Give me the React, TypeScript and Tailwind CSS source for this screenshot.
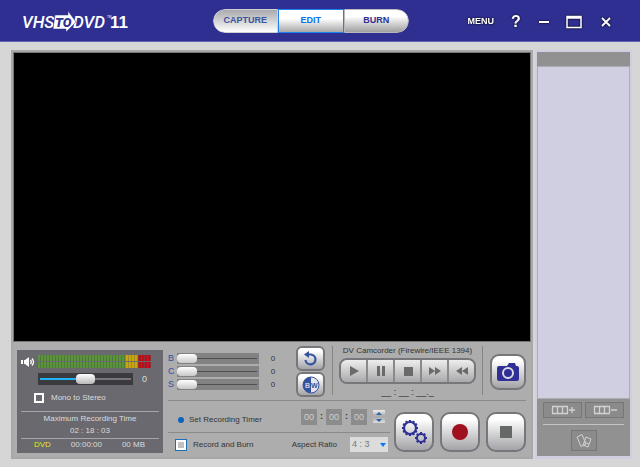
import React, { useState } from 'react';

const raised = 'flex items-center justify-center border-2 border-[#77777b] bg-linear-to-b from-white from-15% to-[#a4a4a8] cursor-pointer';
const winButton = 'flex items-center justify-center text-white drop-shadow-[0_0_1px_#000] cursor-pointer';

const Logo: React.FC = () => (
    <svg width="106" height="24" viewBox="0 0 106 24" fontFamily="Roboto, sans-serif" fill="#fff" role="img">
        <text x="0" y="19" fontSize="17" fontStyle="italic" fontWeight="500">VHS</text>
        <text x="51" y="19" fontSize="17" fontStyle="italic" fontWeight="500">DVD</text>
        <path d="M33 6H46V2L54 13L44 23V20H31Z" stroke="#2f2f91" strokeWidth="0.500" />
        <text x="33" y="18" fontSize="13" fontStyle="italic" fontWeight="900" fill="#2f2f91">TO</text>
        <text x="85" y="9" fontSize="3">TM</text>
        <text x="88" y="19" fontFamily="Liberation Sans, sans-serif" fontSize="17" fontWeight="700">11</text>
    </svg>
);

const Header: React.FC = () => (
    <header className="grid grid-cols-[13fr_auto_14fr] items-center h-[42px] bg-[#2f2f91] border-b border-[#6464b4] pl-[22px] pr-[26px]">
        <Logo />
        <nav className="flex h-6 w-[196px] rounded-xl overflow-hidden text-[9px] font-bold text-[#2f2f91]">
            <button className="w-[65px] rounded-l-xl border border-[#d0d0d4] bg-linear-to-b from-[#aaaaae] to-white text-[#3c559b] cursor-pointer">CAPTURE</button>
            <button className="w-[66px] border border-[#1e82f0] bg-linear-to-b from-white from-40% to-[#a8a8aa] text-[#0a6ef0] cursor-pointer">EDIT</button>
            <button className="w-[65px] rounded-r-xl border border-[#b8b8bc] bg-linear-to-b from-white from-30% to-[#a0a0a2] cursor-pointer">BURN</button>
        </nav>
        <div className="flex items-center justify-end gap-4 pt-[2px]">
            <button className={`${winButton} text-[9px] font-bold`}>MENU</button>
            <button className={`${winButton} w-3 text-base font-bold`} aria-label="Help">?</button>
            <button className={`${winButton} w-3`} aria-label="Minimize">
                <svg width="10" height="12"><path d="M0 6H10" stroke="currentColor" strokeWidth="2" /></svg>
            </button>
            <button className={`${winButton} w-4`} aria-label="Maximize">
                <svg width="16" height="14"><path d="M1 1.500H15V12.500H1Z M1 3H15" fill="none" stroke="currentColor" strokeWidth="1.500" /></svg>
            </button>
            <button className={`${winButton} w-4`} aria-label="Close">
                <svg width="10" height="10"><path d="M1 1L9 9M9 1L1 9" stroke="currentColor" strokeWidth="1.800" /></svg>
            </button>
        </div>
    </header>
);

const Meter: React.FC = () => (
    <div className="flex h-[6px] w-[114px]">
        <div className="w-[88px] bg-[repeating-linear-gradient(90deg,#4e7a3c_0_1px,#5c923c_1px_3px)]" />
        <div className="w-[13px] bg-[repeating-linear-gradient(90deg,#a08a28_0_1px,#caa60c_1px_3px)]" />
        <div className="w-[13px] bg-[repeating-linear-gradient(90deg,#8a3038_0_1px,#be0c18_1px_3px)]" />
    </div>
);

const AudioPanel: React.FC = () => {
    const [volume, setVolume] = useState(50);

    return (
        <section className="w-[146px] h-[103px] shrink-0 bg-[#69696f] text-[#dcdcdc] px-1 pt-[5px]">
            <div className="flex items-center gap-[2px]">
                <svg width="14" height="12" viewBox="0 0 14 12" fill="#fff">
                    <path d="M0 4H2V8H0Z M3 4H4L8 1V11L4 8H3Z" />
                    <path d="M9.500 4Q11 6 9.500 8M11 2.500Q14 6 11 9.500" fill="none" stroke="#fff" strokeWidth="1.300" />
                </svg>
                <div className="flex flex-col gap-px">
                    <Meter />
                    <Meter />
                </div>
            </div>
            <div className="flex items-center gap-[9px] mt-[5px] pl-[17px]">
                <input
                    type="range"
                    aria-label="Volume"
                    value={volume}
                    onChange={e => setVolume(Number(e.target.value))}
                    className="appearance-none w-[95px] h-3 px-[2px] bg-[#3b3b3f] [&::-webkit-slider-runnable-track]:bg-[linear-gradient(90deg,#1eb4f5_50%,#77777b_50%)] [&::-webkit-slider-runnable-track]:h-[2px] [&::-webkit-slider-thumb]:appearance-none [&::-webkit-slider-thumb]:-mt-1 [&::-webkit-slider-thumb]:w-[19px] [&::-webkit-slider-thumb]:h-[10px] [&::-webkit-slider-thumb]:rounded-[4px] [&::-webkit-slider-thumb]:bg-linear-to-b [&::-webkit-slider-thumb]:from-white [&::-webkit-slider-thumb]:to-[#b9b9bb]"
                />
                <span className="text-[9px] leading-3">0</span>
            </div>
            <label className="flex items-center gap-[7px] mt-[7px] pl-[13px] leading-[12px]">
                <input type="checkbox" className="appearance-none size-[10px] border-2 border-white checked:bg-[#1eb4f5]" />
                Mono to Stereo
            </label>
            <div className="mt-[7px] py-px border-y border-[#a5a5a9] text-center leading-[12px]">
                <div>Maximum Recording Time</div>
                <div className="whitespace-pre">02 : 18 : 03</div>
            </div>
            <div className="flex justify-between pl-[13px] pr-[14px] leading-[12px]">
                <span className="text-[#e6e614]">DVD</span>
                <span>00:00:00</span>
                <span>00 MB</span>
            </div>
        </section>
    );
};

const ColorSlider: React.FC<{ name: string; label: string }> = ({ name, label }) => {
    const [value, setValue] = useState(0);

    return (
        <div className="flex items-center h-[13px]">
            <span className="w-[9px] text-[9px] text-[#3250a0]">{name}</span>
            <input
                type="range"
                aria-label={label}
                value={value}
                onChange={e => setValue(Number(e.target.value))}
                className="appearance-none w-[82px] h-[11px] pr-[2px] bg-[#828282] [&::-webkit-slider-runnable-track]:bg-[#505052] [&::-webkit-slider-runnable-track]:h-px [&::-webkit-slider-thumb]:appearance-none [&::-webkit-slider-thumb]:-mt-[4px] [&::-webkit-slider-thumb]:w-[20px] [&::-webkit-slider-thumb]:h-[9px] [&::-webkit-slider-thumb]:rounded-[4px] [&::-webkit-slider-thumb]:bg-linear-to-b [&::-webkit-slider-thumb]:from-white [&::-webkit-slider-thumb]:to-[#c8c8ca]"
            />
            <span className="w-7 text-center">{value}</span>
        </div>
    );
};

const transport = [
    { label: 'Play', path: 'M2 1L11 6L2 11Z' },
    { label: 'Pause', path: 'M2 1H5V11H2Z M7 1H10V11H7Z' },
    { label: 'Stop', path: 'M2 2H11V11H2Z' },
    { label: 'Fast forward', path: 'M0 2L6 6L0 10Z M6 2L12 6L6 10Z' },
    { label: 'Rewind', path: 'M12 2L6 6L12 10Z M6 2L0 6L6 10Z' },
];

const Camcorder: React.FC = () => (
    <div className="flex flex-col items-center w-[151px] h-[49px] border-x border-[#858585]">
        <div className="leading-[10px] whitespace-nowrap">DV Camcorder (Firewire/IEEE 1394)</div>
        <div className="flex mt-[2px] w-[137px] h-[26px] shrink-0 rounded-[8px] border-2 border-[#77777b] divide-x-2 divide-[#8a8a8e] overflow-hidden">
            {transport.map(t => (
                <button key={t.label} aria-label={t.label} className="flex flex-1 items-center justify-center bg-linear-to-b from-[#eeeeee] to-[#a9a9ab] cursor-pointer">
                    <svg width="12" height="12" fill="#6a6a6a"><path d={t.path} /></svg>
                </button>
            ))}
        </div>
        <div className="text-[9px] leading-[16px] text-[#333] whitespace-pre">__ : __ : __._</div>
    </div>
);

const Gear: React.FC<{ cx: number; cy: number; r: number; teeth: number; width: number }> = ({ cx, cy, r, teeth, width }) => (
    <g stroke="#2f2f96" strokeWidth={width} fill="none">
        <circle cx={cx} cy={cy} r={r} />
        {Array.from({ length: teeth }, (_, i) => {
            const a = (i * 2 * Math.PI) / teeth;
            return (
                <line
                    key={i}
                    x1={cx + Math.cos(a) * r}
                    y1={cy + Math.sin(a) * r}
                    x2={cx + Math.cos(a) * (r + 2)}
                    y2={cy + Math.sin(a) * (r + 2)}
                />
            );
        })}
    </g>
);

const Timer: React.FC = () => (
    <div className="flex items-center gap-[3px]">
        {['Hours', 'Minutes', 'Seconds'].map((unit, i) => (
            <React.Fragment key={unit}>
                {i > 0 && <span className="w-[3px] text-center text-[9px] font-bold">:</span>}
                <input aria-label={unit} defaultValue="00" className="w-4 h-4 bg-[#8c8c8c] text-center text-[9px] text-[#cfcfcf]" />
            </React.Fragment>
        ))}
        <div className="flex flex-col gap-px ml-[3px]">
            <button aria-label="Increase" className="flex items-center justify-center w-3 h-[6px] bg-linear-to-b from-[#eee] to-[#aaa]">
                <svg width="6" height="3" fill="#2864aa"><path d="M0 3L3 0L6 3Z" /></svg>
            </button>
            <button aria-label="Decrease" className="flex items-center justify-center w-3 h-[6px] bg-linear-to-b from-[#aaa] to-[#ddd]">
                <svg width="6" height="3" fill="#2864aa"><path d="M0 0L3 3L6 0Z" /></svg>
            </button>
        </div>
    </div>
);

const Controls: React.FC = () => (
    <div className="flex gap-[5px] pl-1 pr-[5px] pt-[3px] pb-1">
        <div className="flex items-end"><AudioPanel /></div>
        <div className="flex-1 flex flex-col text-[#333] pb-px">
            <div className="flex justify-between h-[56px] border-b border-[#8a8a8a] pt-px">
                <div className="pt-[6px]">
                    <ColorSlider name="B" label="Brightness" />
                    <ColorSlider name="C" label="Contrast" />
                    <ColorSlider name="S" label="Saturation" />
                </div>
                <div className="flex gap-[7px]">
                    <div className="flex flex-col gap-px">
                        <button className={`${raised} w-[29px] h-[25px] rounded-[6px]`} aria-label="Reset">
                            <svg width="17" height="17" viewBox="0 0 17 17">
                                <path d="M5 4.500H9A5 5 0 1 1 3.500 10" fill="none" stroke="#34539c" strokeWidth="2.200" />
                                <path d="M7 1V8L2 4.500Z" fill="#34539c" />
                            </svg>
                        </button>
                        <button className={`${raised} w-[29px] h-[25px] rounded-[6px]`} aria-label="Black and white">
                            <svg width="18" height="18" viewBox="0 0 18 18" fontFamily="Liberation Sans" fontSize="7" fontWeight="700">
                                <circle cx="9" cy="9" r="8" fill="#e4e4ea" stroke="#34539c" />
                                <path d="M9 1A8 8 0 0 0 9 17Z" fill="#34539c" />
                                <text x="3" y="12" fill="#c8d0e8">B</text>
                                <text x="9" y="12" fill="#34539c">W</text>
                            </svg>
                        </button>
                    </div>
                    <Camcorder />
                    <button className={`${raised} size-9 rounded-[9px] mt-2`} aria-label="Snapshot">
                        <svg width="22" height="20" viewBox="0 0 22 20">
                            <path d="M2 4H10L12 1H18L19 4H20Q22 4 22 6V17Q22 19 20 19H2Q0 19 0 17V6Q0 4 2 4Z" fill="#2f2f96" />
                            <circle cx="11" cy="11" r="5" fill="none" stroke="#dcdce4" strokeWidth="2" />
                        </svg>
                    </button>
                </div>
            </div>
            <div className="flex flex-1 gap-1">
                <div className="flex-1 flex flex-col">
                    <div className="flex items-center justify-between h-8 border-b border-[#8a8a8a] pl-[10px] pr-[5px]">
                        <div className="flex items-center gap-[5px] pt-[6px]">
                            <span className="size-[6px] rounded-full bg-[#0a64be]" />
                            Set Recording Timer
                        </div>
                        <Timer />
                    </div>
                    <div className="flex items-center justify-between flex-1 pl-2 pr-[2px] pt-1">
                        <label className="flex items-center gap-[7px]">
                            <input type="checkbox" className="appearance-none size-[10px] bg-[#c0c0c0] border-2 border-white outline outline-[#1e6eb4] checked:bg-[#1e6eb4]" />
                            Record and Burn
                        </label>
                        <label className="flex items-center gap-[13px]">
                            Aspect Ratio
                            <span className="grid items-center w-[38px] h-[15px] bg-[#dcdcdc]">
                                <select className="appearance-none col-start-1 row-start-1 pl-[2px] text-[9px] text-[#777]">
                                    <option>4 : 3</option>
                                    <option>16 : 9</option>
                                </select>
                                <svg className="col-start-1 row-start-1 justify-self-end mr-[2px] pointer-events-none" width="6" height="5" fill="#0a78f0"><path d="M0 1H6L3 5Z" /></svg>
                            </span>
                        </label>
                    </div>
                </div>
                <div className="flex gap-[6px] pt-[11px]">
                    <button className={`${raised} size-10 rounded-[10px]`} aria-label="Settings">
                        <svg width="28" height="28" viewBox="0 0 28 28">
                            <Gear cx={10} cy={10} r={6} teeth={12} width={2.2} />
                            <Gear cx={21} cy={20} r={4} teeth={8} width={2} />
                        </svg>
                    </button>
                    <button className={`${raised} size-10 rounded-[10px]`} aria-label="Record">
                        <span className="size-4 rounded-full bg-[#a0101e]" />
                    </button>
                    <button className={`${raised} size-10 rounded-[10px]`} aria-label="Stop capture">
                        <span className="size-3 bg-[#656866]" />
                    </button>
                </div>
            </div>
        </div>
    </div>
);

const sideButton = 'flex items-center justify-center h-4 bg-[#8b8b8b] border border-[#777] text-[#d2d2d2] cursor-pointer';

const ClipList: React.FC = () => (
    <aside className="flex flex-col w-[97px] shrink-0 border-2 border-b-3 border-[#cfcfe1] bg-[#cfcfe1]">
        <div className="h-[14px] bg-[#919191]" />
        <div className="flex-1 border border-[#adadb4]" />
        <div className="h-[57px] bg-[#919191] px-[6px] pt-[3px]">
            <div className="flex gap-[3px]">
                <button className={`${sideButton} flex-1`} aria-label="Add clip">
                    <svg width="24" height="10" fill="none" stroke="currentColor"><path d="M1 1.500H17M1 8.500H17M1.500 2V8M6.500 2V8M11.500 2V8M16.500 2V8M18 5H24M21 2V8" strokeWidth="1.300" /></svg>
                </button>
                <button className={`${sideButton} flex-1`} aria-label="Remove clip">
                    <svg width="24" height="10" fill="none" stroke="currentColor"><path d="M1 1.500H17M1 8.500H17M1.500 2V8M6.500 2V8M11.500 2V8M16.500 2V8M18 5H24" strokeWidth="1.300" /></svg>
                </button>
            </div>
            <div className="mt-[6px] border-t border-[#c4c4c4]" />
            <button className={`${sideButton} w-[26px] h-[21px] mt-[5px] mx-auto`} aria-label="Arrange clips">
                <svg width="18" height="16" fill="none" stroke="currentColor"><path d="M2 4L7 1.500L11 11L6 13.500Z M11 4L16 6L13 14L8 12Z M9 9L14 11" /></svg>
            </button>
        </div>
    </aside>
);

export default function App() {
    return (
        <div className="flex flex-col min-h-screen bg-[#d6d6d6] font-['Liberation_Sans',Arial,sans-serif] text-[8px]">
            <Header />
            <main className="flex flex-1 gap-[2px] pt-2 pl-[11px] pr-2 pb-2">
                <section className="flex flex-col flex-1 bg-[#adadad] border-2 border-[#a8a8a8]">
                    <div className="flex-1 bg-black border border-[#777]" />
                    <Controls />
                </section>
                <ClipList />
            </main>
        </div>
    );
}
